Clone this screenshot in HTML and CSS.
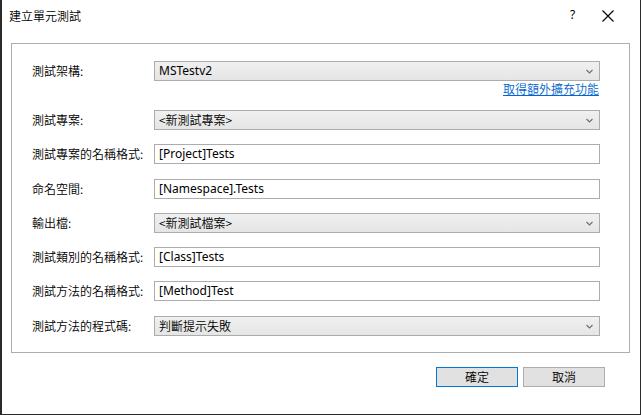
FILE: index.html
```html
<!DOCTYPE html>
<html>
<head>
<meta charset="utf-8">
<link rel="stylesheet" href="styles.css">
</head>
<body>
<div class="window">
  <div class="titlebar">
    <span class="title">建立單元測試</span>
    <span class="help">?</span>
    <span class="close"><svg width="12" height="12" viewBox="0 0 12 12"><path d="M0.5 0.5L11.5 11.5M11.5 0.5L0.5 11.5" stroke="#000" stroke-width="1.1" fill="none"/></svg></span>
  </div>
  <div class="content">
    <div class="group">
      <div class="row">
        <label class="lbl">測試架構:</label>
        <div class="combo"><span>MSTestv2</span><svg class="chev" width="7" height="5" viewBox="0 0 7 5"><path d="M0.5 1L3.5 4L6.5 1" stroke="#707070" stroke-width="1.2" fill="none"/></svg></div>
      </div>
      <div class="linkrow"><a class="link">取得額外擴充功能</a></div>
      <div class="row">
        <label class="lbl">測試專案:</label>
        <div class="combo"><span class="cjk">&lt;新測試專案&gt;</span><svg class="chev" width="7" height="5" viewBox="0 0 7 5"><path d="M0.5 1L3.5 4L6.5 1" stroke="#707070" stroke-width="1.2" fill="none"/></svg></div>
      </div>
      <div class="row">
        <label class="lbl">測試專案的名稱格式:</label>
        <div class="input">[Project]Tests</div>
      </div>
      <div class="row plus1">
        <label class="lbl">命名空間:</label>
        <div class="input">[Namespace].Tests</div>
      </div>
      <div class="row">
        <label class="lbl">輸出檔:</label>
        <div class="combo"><span class="cjk">&lt;新測試檔案&gt;</span><svg class="chev" width="7" height="5" viewBox="0 0 7 5"><path d="M0.5 1L3.5 4L6.5 1" stroke="#707070" stroke-width="1.2" fill="none"/></svg></div>
      </div>
      <div class="row">
        <label class="lbl">測試類別的名稱格式:</label>
        <div class="input">[Class]Tests</div>
      </div>
      <div class="row">
        <label class="lbl">測試方法的名稱格式:</label>
        <div class="input">[Method]Test</div>
      </div>
      <div class="row plus1">
        <label class="lbl">測試方法的程式碼:</label>
        <div class="combo"><span class="cjk">判斷提示失敗</span><svg class="chev" width="7" height="5" viewBox="0 0 7 5"><path d="M0.5 1L3.5 4L6.5 1" stroke="#707070" stroke-width="1.2" fill="none"/></svg></div>
      </div>
    </div>
    <div class="buttons">
      <button class="btn default">確定</button>
      <button class="btn">取消</button>
    </div>
  </div>
</div>
</body>
</html>
```

FILE: styles.css
```css
html, body {
  margin: 0;
  padding: 0;
  background: #2a2a2a;
}
body {
  width: 641px;
  height: 415px;
  overflow: hidden;
  font-family: "Segoe UI", "Noto Sans", "Noto Sans CJK TC", sans-serif;
  font-size: 12px;
  color: #000;
}
.window {
  box-sizing: border-box;
  width: 641px;
  height: 415px;
  background: #fff;
  border-left: 2px solid #2b2b2b;
  border-right: 1px solid #2b2b2b;
  border-bottom: 1px solid #2b2b2b;
  display: flex;
  flex-direction: column;
}
.titlebar {
  height: 31px;
  display: flex;
  align-items: center;
  position: relative;
}
.title {
  margin-left: 7px;
  font-family: "Noto Sans CJK TC", sans-serif;
  font-weight: 350;
  font-size: 12px;
  line-height: 14px;
}
.help {
  position: absolute;
  left: 568px;
  top: 8px;
  font-family: "Noto Sans", sans-serif;
  font-size: 12px;
  line-height: 14px;
}
.close {
  position: absolute;
  left: 600px;
  top: 10px;
  width: 12px;
  height: 12px;
  display: block;
}
.close svg { display: block; }
.content {
  padding: 12px 10px 0 9px;
}
.group {
  border: 1px solid #adadad;
  padding: 17px 29px 16px 20px;
  display: flex;
  flex-direction: column;
  gap: 14px;
}
.row {
  display: flex;
  align-items: center;
  height: 20px;
}
.row.plus1 {
  margin-top: 1px;
}
.lbl {
  width: 122px;
  flex: none;
  font-family: "Noto Sans CJK TC", sans-serif;
  font-weight: 350;
  font-size: 12px;
  line-height: 14px;
}
.combo, .input {
  box-sizing: border-box;
  flex: 1;
  height: 20px;
  border: 1px solid #acacac;
  display: flex;
  align-items: center;
  padding-left: 4px;
  font-family: "Noto Sans", "Noto Sans CJK TC", sans-serif;
  font-size: 12px;
  line-height: 14px;
  white-space: nowrap;
}
.cjk {
  font-family: "Noto Sans CJK TC", sans-serif;
  font-weight: 350;
}
.combo {
  background: linear-gradient(#f0f0f0, #e5e5e5);
  justify-content: space-between;
  padding-right: 6px;
}
.input {
  background: #fff;
}
.chev { display: block; }
.linkrow {
  display: flex;
  justify-content: flex-end;
  margin-top: -13px;
  height: 14px;
}
.link {
  color: #0066cc;
  text-decoration: underline;
  font-family: "Noto Sans CJK TC", sans-serif;
  font-weight: 350;
  font-size: 12px;
  line-height: 14px;
  margin-right: 1px;
}
.buttons {
  display: flex;
  justify-content: flex-end;
  gap: 5px;
  margin-top: 14px;
  padding-right: 25px;
}
.btn {
  box-sizing: border-box;
  width: 82px;
  height: 20px;
  background: #e1e1e1;
  border: 1px solid #adadad;
  font-family: "Noto Sans CJK TC", sans-serif;
  font-weight: 350;
  font-size: 12px;
  line-height: 14px;
  padding: 0;
  color: #000;
}
.btn.default {
  border: 1px solid #0078d7;
}
```
